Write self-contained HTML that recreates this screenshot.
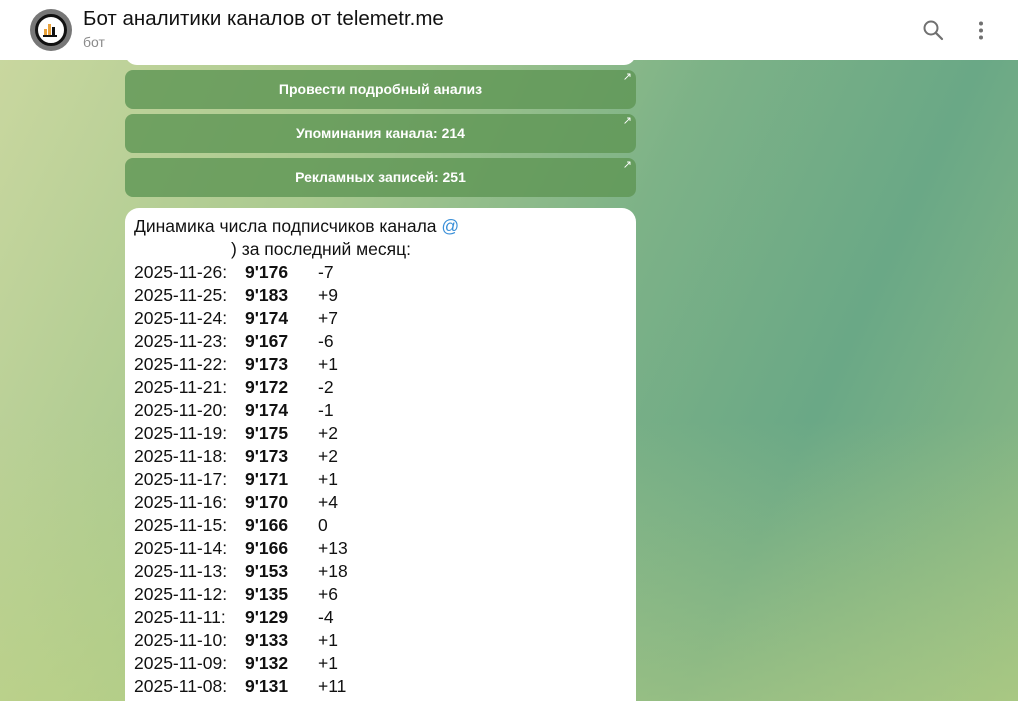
<!DOCTYPE html>
<html style="overflow:hidden;width:1018px;height:701px"><head><meta charset="utf-8"><style>
*{margin:0;padding:0;box-sizing:border-box}
html,body{overflow:hidden}
body{width:1018px;height:701px;position:relative;font-family:"Liberation Sans",sans-serif;
background:linear-gradient(115deg,#cbd8a0 0%,#a9c98f 30%,#7db287 55%,#6aa886 75%,#8fbb84 100%);}
.bgo{position:absolute;inset:0;background:linear-gradient(180deg,rgba(255,255,255,0) 60%,rgba(200,215,130,0.45) 100%)}
.hdr{position:absolute;left:0;top:0;width:1018px;height:60px;background:#fff}
.av{position:absolute;left:30px;top:9px;width:42px;height:42px;border-radius:50%;background:#777}
.av .in{position:absolute;left:5px;top:5px;width:32px;height:32px;border-radius:50%;background:#fff;border:3px solid #111}
.t{position:absolute;left:83px;top:7px;font-size:20.5px;color:#111}
.s{position:absolute;left:83px;top:34px;font-size:14px;color:#8a8a8a}
.top{position:absolute;left:125px;top:50px;width:511px;height:15px;background:#fff;border-radius:0 0 12px 12px}
.btn{position:absolute;left:125px;width:511px;height:39px;background:rgba(95,150,85,0.82);border-radius:8px;color:#fff;font-weight:bold;font-size:14px;text-align:center;line-height:39px}
.btn:after{content:"↗";position:absolute;right:4px;top:-12px;font-size:11px;font-weight:normal}
.bub{position:absolute;left:125px;top:208px;width:511px;height:493px;background:#fff;border-radius:14px 14px 0 0}
.l{position:absolute;left:134px;font-size:17.5px;color:#111;white-space:nowrap}
.l b{position:absolute;left:111px}
.l i{position:absolute;left:184px;font-style:normal}
</style></head><body>
<div class="bgo"></div>
<div class="top"></div>
<div class="btn" style="top:70px">Провести подробный анализ</div>
<div class="btn" style="top:114px">Упоминания канала: 214</div>
<div class="btn" style="top:158px">Рекламных записей: 251</div>
<div class="bub"></div>
<div class="l" style="top:216px">Динамика числа подписчиков канала <span style="color:#3a8fd8">@</span></div>
<div class="l" style="top:239px;left:231px">) за последний месяц:</div>
<div class="l" style="top:262px">2025-11-26:<b>9'176</b><i>-7</i></div>
<div class="l" style="top:285px">2025-11-25:<b>9'183</b><i>+9</i></div>
<div class="l" style="top:308px">2025-11-24:<b>9'174</b><i>+7</i></div>
<div class="l" style="top:331px">2025-11-23:<b>9'167</b><i>-6</i></div>
<div class="l" style="top:354px">2025-11-22:<b>9'173</b><i>+1</i></div>
<div class="l" style="top:377px">2025-11-21:<b>9'172</b><i>-2</i></div>
<div class="l" style="top:400px">2025-11-20:<b>9'174</b><i>-1</i></div>
<div class="l" style="top:423px">2025-11-19:<b>9'175</b><i>+2</i></div>
<div class="l" style="top:446px">2025-11-18:<b>9'173</b><i>+2</i></div>
<div class="l" style="top:469px">2025-11-17:<b>9'171</b><i>+1</i></div>
<div class="l" style="top:492px">2025-11-16:<b>9'170</b><i>+4</i></div>
<div class="l" style="top:515px">2025-11-15:<b>9'166</b><i>0</i></div>
<div class="l" style="top:538px">2025-11-14:<b>9'166</b><i>+13</i></div>
<div class="l" style="top:561px">2025-11-13:<b>9'153</b><i>+18</i></div>
<div class="l" style="top:584px">2025-11-12:<b>9'135</b><i>+6</i></div>
<div class="l" style="top:607px">2025-11-11:<b>9'129</b><i>-4</i></div>
<div class="l" style="top:630px">2025-11-10:<b>9'133</b><i>+1</i></div>
<div class="l" style="top:653px">2025-11-09:<b>9'132</b><i>+1</i></div>
<div class="l" style="top:676px">2025-11-08:<b>9'131</b><i>+11</i></div>
<div class="hdr">
 <div class="av"><div class="in">
  <svg width="26" height="26" viewBox="0 0 26 26" style="position:absolute;left:0;top:0">
   <rect x="6" y="12" width="3" height="6" fill="#e8a13a"/><rect x="10" y="7" width="3" height="11" fill="#e8a13a"/><rect x="14" y="10" width="3" height="8" fill="#111"/>
   <rect x="5" y="18" width="14" height="2" fill="#111"/></svg>
 </div></div>
 <div class="t">Бот аналитики каналов от telemetr.me</div>
 <div class="s">бот</div>
 <svg style="position:absolute;left:922px;top:19px" width="22" height="22" viewBox="0 0 22 22"><circle cx="9" cy="9" r="6.5" fill="none" stroke="#707070" stroke-width="2"/><line x1="13.8" y1="13.8" x2="20" y2="20" stroke="#707070" stroke-width="2.2" stroke-linecap="round"/></svg>
 <svg style="position:absolute;left:977px;top:21px" width="8" height="20"><circle cx="4" cy="2.5" r="2" fill="#707070"/><circle cx="4" cy="9.5" r="2" fill="#707070"/><circle cx="4" cy="16.5" r="2" fill="#707070"/></svg>
</div>
</body></html>
